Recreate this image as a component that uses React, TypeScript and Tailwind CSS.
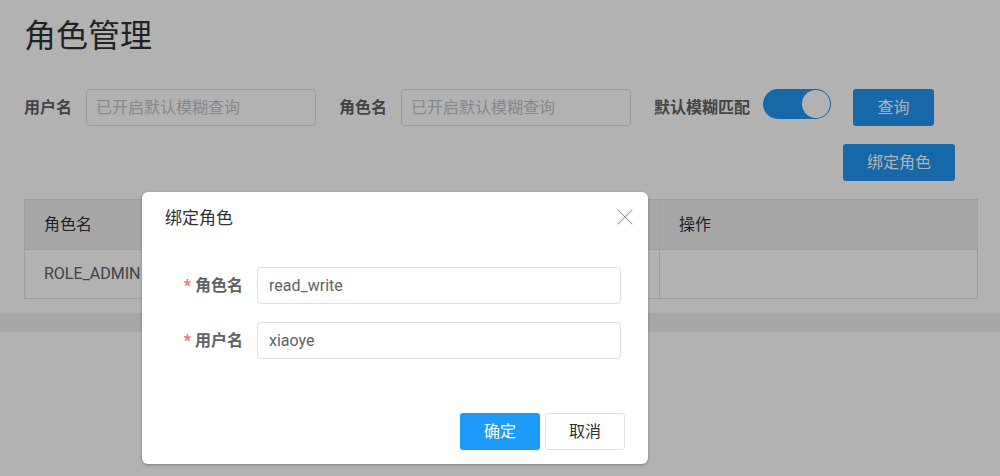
import { X } from "lucide-react";

const font = { fontFamily: 'Roboto, "Noto Sans CJK SC", sans-serif' };

function FilterInput({ placeholder }: { placeholder: string }) {
  return (
    <input
      readOnly
      placeholder={placeholder}
      className="h-[37px] w-[230px] rounded-[4px] border border-[#dcdfe6] bg-white px-[9px] text-[16px] text-[#606266] outline-none placeholder:text-[#c0c4cc]"
    />
  );
}

function FormRow({ label, value }: { label: string; value: string }) {
  return (
    <div className="flex items-center">
      <label className="w-[115px] pr-[14px] text-right text-[16px] font-bold text-[#606266]">
        <span className="mr-[4px] text-[#f56c6c]">*</span>
        {label}
      </label>
      <div className="flex h-[37px] w-[364px] items-center rounded-[4px] border border-[#dcdfe6] px-[11px] text-[16px] text-[#606266]">
        {value}
      </div>
    </div>
  );
}

export default function App() {
  return (
    <div className="relative h-[476px] w-[1000px] overflow-hidden bg-white" style={font}>
      <div className="px-6 pt-[14px]">
        <h1 className="text-[32px] leading-[44px] text-[#303133]">角色管理</h1>

        <div className="mt-[31px] flex items-center">
          <span className="mr-[14px] text-[16px] font-bold text-[#606266]">用户名</span>
          <FilterInput placeholder="已开启默认模糊查询" />
          <span className="ml-[23px] mr-[14px] text-[16px] font-bold text-[#606266]">角色名</span>
          <FilterInput placeholder="已开启默认模糊查询" />
          <span className="ml-[23px] mr-[13px] text-[16px] font-bold text-[#606266]">默认模糊匹配</span>
          <div className="relative mb-[7px] h-[30px] w-[68px] rounded-full bg-[#2196f3]">
            <span className="absolute right-[1px] top-[1px] h-[28px] w-[28px] rounded-full bg-white" />
          </div>
          <button className="ml-[22px] h-[37px] w-[81px] rounded-[3px] bg-[#2196f3] text-[16px] text-white">
            查询
          </button>
        </div>

        <div className="mt-[18px] flex justify-end pr-[21px]">
          <button className="h-[37px] w-[112px] rounded-[3px] bg-[#2196f3] text-[16px] text-white">
            绑定角色
          </button>
        </div>

        <table className="mt-[18px] w-[954px] border-collapse border border-[#e3e3e3] text-[16px] text-[#303133]">
          <thead>
            <tr className="h-[50px] bg-[#f0f0f0]">
              <th className="w-[318px] border-b border-[#e3e3e3] pl-[19px] text-left font-normal">角色名</th>
              <th className="w-[317px] border-b border-[#e3e3e3] pl-[19px] text-left font-normal">描述</th>
              <th className="border-b border-l border-[#e3e3e3] pl-[19px] text-left font-normal">操作</th>
            </tr>
          </thead>
          <tbody>
            <tr className="h-[49px]">
              <td className="pl-[19px] text-[16px] text-[#606266]">ROLE_ADMIN</td>
              <td className="pl-[19px] text-[16px] text-[#606266]">管理员</td>
              <td className="border-l border-[#e3e3e3]" />
            </tr>
          </tbody>
        </table>
      </div>

      <div className="mt-[14px] h-[19px] w-full bg-[#f0f0f0]" />

      <div className="absolute inset-0 bg-black/30" />

      <div className="absolute left-[142px] top-[192px] flex h-[272px] w-[506px] flex-col rounded-[6px] bg-white shadow-[0_1px_3px_rgba(0,0,0,0.3)]">
        <div className="flex items-start justify-between pl-[23px] pr-[9px] pt-[14px]">
          <span className="text-[17px] leading-[24px] text-[#303133]">绑定角色</span>
          <X size={28} strokeWidth={0.9} className="-mt-[3px] text-[#909399]" />
        </div>
        <div className="mt-[36px] flex flex-col gap-[18px]">
          <FormRow label="角色名" value="read_write" />
          <FormRow label="用户名" value="xiaoye" />
        </div>
        <div className="mt-auto flex justify-end gap-[5px] pb-[14px] pr-[23px]">
          <button className="h-[37px] w-[80px] rounded-[3px] bg-[#1e9bfa] text-[16px] text-white">确定</button>
          <button className="h-[37px] w-[80px] rounded-[3px] border border-[#dcdfe6] bg-white text-[16px] text-[#303133]">
            取消
          </button>
        </div>
      </div>
    </div>
  );
}
